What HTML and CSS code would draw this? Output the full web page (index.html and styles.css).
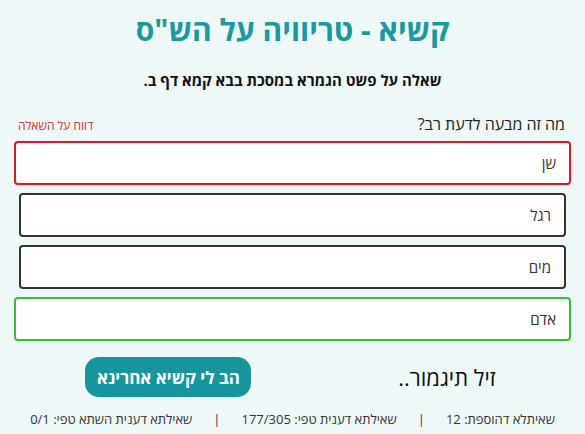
FILE: index.html
```html
<!DOCTYPE html>
<html lang="he" dir="rtl">
<head>
<meta charset="utf-8">
<link rel="stylesheet" href="styles.css">
</head>
<body>
<main class="page">
  <h1 class="title">קשיא - טריוויה על הש"ס</h1>
  <h2 class="subtitle">שאלה על פשט הגמרא במסכת בבא קמא דף ב.</h2>
  <div class="question-row">
    <span class="question">מה זה מבעה לדעת רב?</span>
    <a class="report">דווח על השאלה</a>
  </div>
  <div class="answers">
    <div class="answer wrong">שן</div>
    <div class="answer">רגל</div>
    <div class="answer">מים</div>
    <div class="answer right">אדם</div>
  </div>
  <div class="actions">
    <span class="done">זיל תיגמור..</span>
    <button class="next">הב לי קשיא אחרינא</button>
  </div>
  <div class="stats">
    <span>שאיתלא דהוספת: 12</span>
    <span class="sep">|</span>
    <span>שאילתא דענית טפי: 177/305</span>
    <span class="sep">|</span>
    <span>שאילתא דענית השתא טפי: 0/1</span>
  </div>
</main>
</body>
</html>
```
FILE: styles.css
```css
html, body {
  margin: 0;
  padding: 0;
  background: #eef8f8;
}
body {
  font-family: "Open Sans", "Liberation Sans", "DejaVu Sans", sans-serif;
  color: #222;
}
.page {
  padding: 8px 12px 0 12px;
  display: flex;
  flex-direction: column;
}
.title {
  margin: 0;
  text-align: center;
  color: #1a9aa0;
  font-size: 30px;
  font-weight: 700;
  line-height: 44px;
}
.subtitle {
  margin: 17px 0 0 0;
  text-align: center;
  font-size: 15px;
  font-weight: 700;
  line-height: 22px;
  color: #111;
}
.question-row {
  margin-top: 22px;
  display: flex;
  justify-content: space-between;
  align-items: flex-end;
  padding: 0 8px 0 6px;
}
.question {
  font-size: 16px;
  line-height: 22px;
  color: #222;
}
.report {
  font-size: 12px;
  line-height: 18px;
  color: #e0282c;
}
.answers {
  margin-top: 6px;
  display: flex;
  flex-direction: column;
  gap: 8px;
}
.answer {
  height: 40px;
  margin: 0 7px;
  border: 2px solid #333;
  border-radius: 4px;
  background: #fff;
  display: flex;
  align-items: center;
  padding: 0 13px;
  font-size: 15px;
  color: #333;
}
.answer.wrong {
  margin: 0 2px;
  border-color: #e4161c;
}
.answer.right {
  margin: 0 2px;
  border-color: #2ec42e;
}
.actions {
  margin-top: 16px;
  display: flex;
  justify-content: space-around;
  align-items: center;
  padding: 0 4px 0 0;
}
.done {
  font-size: 22px;
  color: #111;
}
.next {
  font-family: inherit;
  background: #17959c;
  color: #fff;
  border: none;
  border-radius: 14px;
  font-size: 17px;
  font-weight: 700;
  white-space: nowrap;
  padding: 0;
  height: 40px;
  width: 166px;
}
.stats {
  margin-top: 12px;
  display: flex;
  justify-content: center;
  gap: 21px;
  font-size: 13px;
  color: #333;
  line-height: 20px;
}
```
